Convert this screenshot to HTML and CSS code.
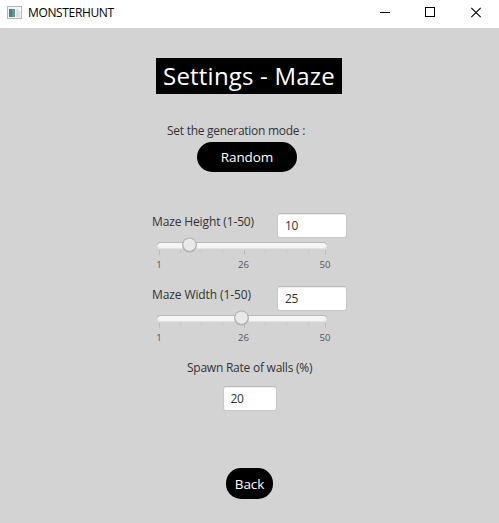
FILE: index.html
```html
<!DOCTYPE html>
<html lang="en">
<head>
<meta charset="utf-8">
<title>MONSTERHUNT</title>
<link rel="stylesheet" href="styles.css">
</head>
<body>
<header class="titlebar">
  <svg class="app-icon" width="15" height="13" viewBox="0 0 15 13">
    <rect x=".5" y=".5" width="14" height="12" fill="#f4f4f4" stroke="#b4b7ba"/>
    <rect x="2" y="3" width="6" height="8" fill="#5b9993"/>
    <rect x="2" y="3" width="3" height="8" fill="#477f83"/>
    <rect x="9" y="3" width="4" height="8" fill="#dbe2e6"/>
    <path d="M12 2h2v3h-2z" fill="#fff"/>
  </svg>
  <span class="app-name">MONSTERHUNT</span>
  <svg class="controls" width="102" height="11" viewBox="0 0 102 11" fill="none" stroke="#000">
    <path d="M0 5.5h10"/>
    <rect x="45.5" y=".5" width="9" height="9"/>
    <path d="M91.3 .8l9.4 9.4M100.7 .8l-9.4 9.4" stroke-width="1.1"/>
  </svg>
</header>
<main class="panel">
  <h1 class="title">Settings - Maze</h1>
  <div class="label mode-label">Set the generation mode :</div>
  <button class="pill random">Random</button>
  <section class="setting">
    <div class="row"><label class="label height-label">Maze Height (1-50)</label><input class="field" value="10"></div>
    <svg class="slider" width="176" height="20" viewBox="0 0 176 20">
      <rect x="5" y="5" width="170" height="6" rx="3" fill="#b9b9b9"/>
      <rect x="5" y="6.5" width="170" height="5.5" rx="2.7" fill="#e2e2e2"/>
      <rect x="6" y="6" width="168" height="5" rx="2.5" fill="#f5f5f5"/>
      <path d="M7.5 13v5M92.5 13v5M173.5 13v5" stroke="#bababa"/>
      <path d="M28.5 13v3M49.5 13v3M70.5 13v3M113.5 13v3M134.5 13v3M156.5 13v3" stroke="#c5c5c5"/>
      <circle cx="37.5" cy="8" r="7.5" fill="#b1b1b1"/><circle cx="37.5" cy="7.7" r="6.2" fill="#e9e9e9"/>
    </svg>
    <div class="scale"><span>1</span><span>26</span><span>50</span></div>
  </section>
  <section class="setting">
    <div class="row"><label class="label width-label">Maze Width (1-50)</label><input class="field" value="25"></div>
    <svg class="slider" width="176" height="20" viewBox="0 0 176 20">
      <rect x="5" y="5" width="170" height="6" rx="3" fill="#b9b9b9"/>
      <rect x="5" y="6.5" width="170" height="5.5" rx="2.7" fill="#e2e2e2"/>
      <rect x="6" y="6" width="168" height="5" rx="2.5" fill="#f5f5f5"/>
      <path d="M7.5 13v5M92.5 13v5M173.5 13v5" stroke="#bababa"/>
      <path d="M28.5 13v3M49.5 13v3M70.5 13v3M113.5 13v3M134.5 13v3M156.5 13v3" stroke="#c5c5c5"/>
      <circle cx="89.5" cy="8" r="7.5" fill="#b1b1b1"/><circle cx="89.5" cy="7.7" r="6.2" fill="#e9e9e9"/>
    </svg>
    <div class="scale"><span>1</span><span>26</span><span>50</span></div>
  </section>
  <div class="label spawn-label">Spawn Rate of walls (%)</div>
  <input class="field spawn" value="20">
  <button class="pill back">Back</button>
</main>
</body>
</html>
```
FILE: styles.css
```css
* { box-sizing: border-box; }
body { margin: 0; height: 523px; overflow: hidden; background: #d3d3d3; font-family: "Open Sans", "Noto Sans", sans-serif; color: #333; }
.titlebar { height: 28px; background: #fff; display: flex; align-items: center; padding: 0 17px 4px 7px; }
.app-name { margin-left: 6px; font-size: 12px; letter-spacing: -.35px; color: #000; white-space: nowrap; }
.controls { margin-left: auto; }
.panel { display: flex; flex-direction: column; align-items: center; padding-top: 30px; }
.title { margin: 0 1px 0 0; width: 186px; height: 36px; background: #000; color: #fff; font-size: 24px; font-weight: 400; line-height: 36px; letter-spacing: .2px; text-align: center; white-space: nowrap; }
.label { font-size: 12px; line-height: 18px; white-space: nowrap; letter-spacing: -.2px; }
.mode-label { width: 139px; margin: 28px 26px 0 0; letter-spacing: -.27px; }
.height-label { letter-spacing: -.13px; }
.width-label { letter-spacing: -.1px; }
.pill { border: 0; padding: 0; background: #000; color: #fff; font-family: inherit; font-size: 13.5px; line-height: 20px; height: 30px; border-radius: 15px; white-space: nowrap; }
.random { width: 100px; margin: 2px 5px 41px 0; letter-spacing: -.1px; }
.setting { width: 195px; height: 73px; }
.row { display: flex; justify-content: space-between; height: 25px; }
.field { width: 70px; height: 25px; border: 1px solid #c8c8c8; border-top-color: #b9b9b9; border-radius: 3px; padding: 0 7px; background: #fff; box-shadow: inset 0 1px 1px #eee; font: 12px "Open Sans", "Noto Sans", sans-serif; letter-spacing: -.3px; color: #333; }
.slider { display: block; margin-top: -1px; }
.scale { display: grid; grid-template-columns: 42px 127px 36px; width: 205px; margin: 1px 0 0 -14px; font-size: 9.6px; line-height: 14px; text-align: center; color: #555; }
.spawn-label { width: 125px; letter-spacing: -.24px; }
.spawn { width: 54px; margin-top: 9px; }
.back { width: 47px; height: 31px; margin-top: 57px; letter-spacing: -.1px; }
```
